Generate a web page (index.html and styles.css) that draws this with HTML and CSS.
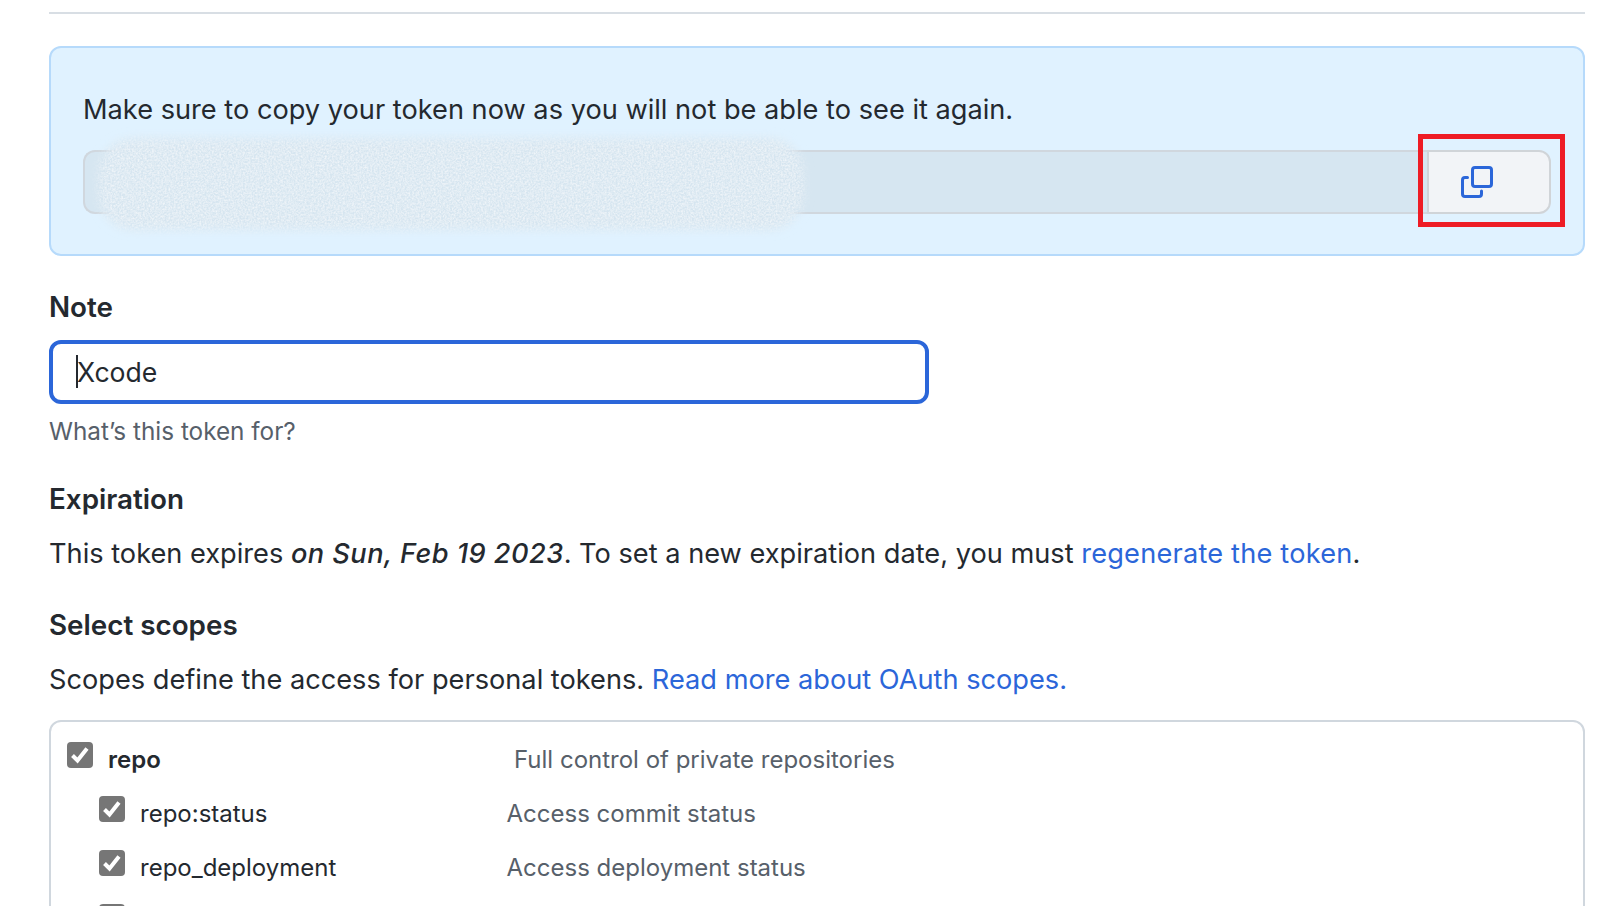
FILE: index.html
```html
<!DOCTYPE html>
<html lang="en">
<head>
<meta charset="utf-8">
<title>Token</title>
<link rel="stylesheet" href="styles.css">
</head>
<body>
<main class="page">
  <hr class="rule">
  <section class="flash">
    <p class="flash-text">Make sure to copy your token now as you will not be able to see it again.</p>
    <div class="token">
      <div class="token-field"></div>
      <button class="copy" type="button" aria-label="Copy token">
        <svg class="copy-icon" viewBox="0 0 32 32" fill="none" stroke="#2b66d9" stroke-width="3" stroke-linecap="round" stroke-linejoin="round">
          <rect x="11.5" y="1.5" width="19" height="19" rx="2.5"/>
          <path d="M6.5 11.5H4A2.5 2.5 0 0 0 1.5 14v14.000A2.5 2.5 0 0 0 4 30.500h14a2.500 2.500 0 0 0 2.500-2.500v-3"/>
        </svg>
      </button>
    </div>
    <svg class="smudge" viewBox="0 0 746 132" aria-hidden="true">
      <defs>
        <filter id="smudge-noise" x="-5%" y="-20%" width="110%" height="140%">
          <feGaussianBlur in="SourceGraphic" stdDeviation="5" result="soft"/>
          <feTurbulence type="fractalNoise" baseFrequency="0.55" numOctaves="2" seed="4" result="grain"/>
          <feColorMatrix in="grain" type="matrix" values="0 0 0 0 1  0 0 0 0 1  0 0 0 0 1  1.1 0 0 0 -0.32" result="specks"/>
          <feComposite in="specks" in2="soft" operator="in" result="clipped"/>
          <feMerge>
            <feMergeNode in="soft"/>
            <feMergeNode in="clipped"/>
          </feMerge>
        </filter>
      </defs>
      <rect x="20" y="20" width="706" height="92" rx="36" fill="#d6e5f0" filter="url(#smudge-noise)"/>
    </svg>
    <div class="callout"></div>
  </section>

  <h2 class="label label-note">Note</h2>
  <div class="note-input"><span class="caret"></span>Xcode</div>
  <p class="hint">What’s this token for?</p>

  <h2 class="label label-exp">Expiration</h2>
  <p class="body-text">This token expires <em>on Sun, Feb 19 2023</em>. To set a new expiration date, you must <a class="link-wide" href="#">regenerate the token</a>.</p>

  <h2 class="label label-scopes">Select scopes</h2>
  <p class="body-text">Scopes define the access for personal tokens. <a href="#">Read more about OAuth scopes.</a></p>

  <section class="scopes">
    <div class="scope scope-parent">
      <span class="check"><svg viewBox="0 0 26 26"><path d="M5.500 13.500l5 5 9.500-12" fill="none" stroke="#fff" stroke-width="4"/></svg></span>
      <span class="scope-name">repo</span>
      <span class="scope-desc">Full control of private repositories</span>
    </div>
    <div class="scope scope-child">
      <span class="check"><svg viewBox="0 0 26 26"><path d="M5.500 13.500l5 5 9.500-12" fill="none" stroke="#fff" stroke-width="4"/></svg></span>
      <span class="scope-name">repo:status</span>
      <span class="scope-desc">Access commit status</span>
    </div>
    <div class="scope scope-child">
      <span class="check"><svg viewBox="0 0 26 26"><path d="M5.500 13.500l5 5 9.500-12" fill="none" stroke="#fff" stroke-width="4"/></svg></span>
      <span class="scope-name">repo_deployment</span>
      <span class="scope-desc">Access deployment status</span>
    </div>
    <div class="scope scope-child">
      <span class="check"></span>
    </div>
  </section>
</main>
</body>
</html>
```
FILE: styles.css
```css
* { box-sizing: border-box; }
html, body { margin: 0; height: 906px; overflow: hidden; background: #fff; }
body { font-family: Inter, "Liberation Sans", sans-serif; color: #24292f; }
.page { padding: 12px 33px 0 49px; }
.rule { margin: 0; height: 2px; border: 0; background: #d8dee4; }

.flash {
  position: relative;
  margin-top: 32px;
  height: 210px;
  padding: 46px 32px 0;
  background: #e0f2ff;
  border: 2px solid #b6dafb;
  border-radius: 12px;
}
.flash-text { margin: 0; font-size: 27.2px; line-height: 32px; }
.token { display: flex; height: 64px; margin-top: 24px; }
.token-field {
  flex: 1;
  background: #d6e6f1;
  border: 2px solid #d0d7de;
  border-right: 0;
  border-radius: 12px 0 0 12px;
}
.copy {
  width: 124px;
  padding: 0 24px 0 0;
  display: flex;
  align-items: center;
  justify-content: center;
  background: #f2f4f7;
  border: 2px solid #d0d4d8;
  border-radius: 0 12px 12px 0;
}
.copy-icon { width: 32px; height: 32px; }
.smudge {
  position: absolute;
  left: 27px; top: 70px;
  width: 746px; height: 132px;
}
.callout {
  position: absolute;
  left: 1367px; top: 86px;
  width: 147px; height: 93px;
  border: 5px solid #ee1c25;
}

.label { margin: 0; font-size: 27.8px; line-height: 32px; font-weight: 600; }
.label-note { margin-top: 35px; }
.note-input {
  position: relative;
  width: 880px;
  height: 64px;
  margin-top: 17px;
  padding-left: 24px;
  border: 4px solid #2b66d9;
  border-radius: 12px;
  font-size: 26.6px;
  line-height: 56px;
  color: #24292f;
}
.caret {
  position: absolute;
  left: 23px; top: 11px;
  width: 2px; height: 33px;
  background: #24292f;
}
.hint { margin: 12px 0 0; font-size: 24.3px; line-height: 30px; color: #57606a; }
.label-exp { margin-top: 37px; }
.label-scopes { margin-top: 38px; }
.body-text { margin: 22px 0 0; font-size: 27.2px; line-height: 34px; }
.body-text em { font-weight: 500; letter-spacing: 0.45px; }
.body-text a { color: #2b66d9; text-decoration: none; }
.body-text .link-wide { letter-spacing: 0.2px; }

.scopes {
  height: 220px;
  margin-top: 23px;
  padding: 20px 0 0 16px;
  border: 2px solid #d0d7de;
  border-radius: 12px;
}
.scope { display: flex; align-items: flex-start; height: 54px; font-size: 24px; line-height: 30px; }
.scope-child { margin-left: 32px; }
.check {
  flex: none;
  width: 26px; height: 26px;
  background: #767676;
  border-radius: 4px;
}
.check svg { display: block; width: 26px; height: 26px; }
.scope-name { margin-left: 15px; padding-top: 3px; }
.scope-parent .scope-name { width: 406px; font-weight: 600; }
.scope-child .scope-name { width: 366.5px; }
.scope-desc { padding-top: 3px; color: #57606a; }
```
